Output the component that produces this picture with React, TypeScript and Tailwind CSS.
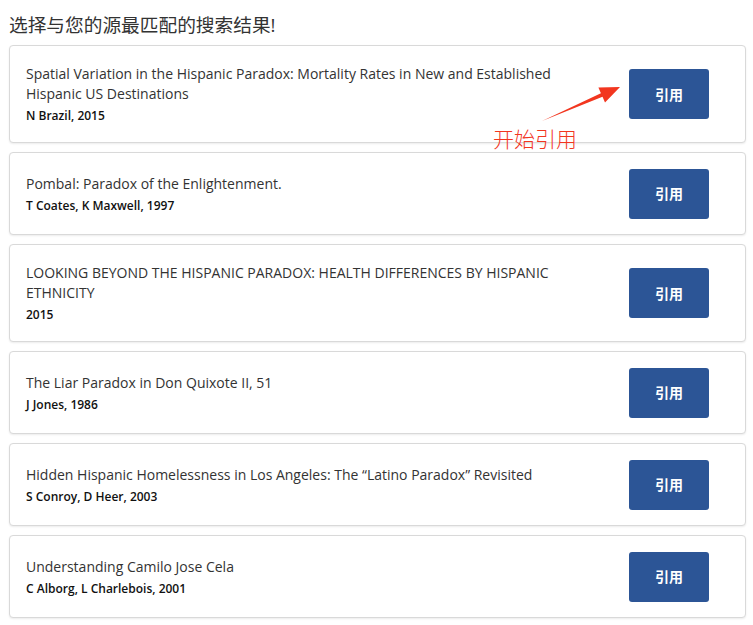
import React from 'react';

interface Source {
  title: string;
  meta: string;
}

const sources: Source[] = [
  {
    title: 'Spatial Variation in the Hispanic Paradox: Mortality Rates in New and Established Hispanic US Destinations',
    meta: 'N Brazil, 2015',
  },
  { title: 'Pombal: Paradox of the Enlightenment.', meta: 'T Coates, K Maxwell, 1997' },
  {
    title: 'LOOKING BEYOND THE HISPANIC PARADOX: HEALTH DIFFERENCES BY HISPANIC ETHNICITY',
    meta: '2015',
  },
  { title: 'The Liar Paradox in Don Quixote II, 51', meta: 'J Jones, 1986' },
  {
    title: 'Hidden Hispanic Homelessness in Los Angeles: The \u201cLatino Paradox\u201d Revisited',
    meta: 'S Conroy, D Heer, 2003',
  },
  { title: 'Understanding Camilo Jose Cela', meta: 'C Alborg, L Charlebois, 2001' },
];

const font = "font-['Open_Sans','Noto_Sans_CJK_SC',sans-serif]";

const SourceCard = ({ source }: { source: Source }) => (
  <div className="flex min-h-[83px] items-center rounded-[4px] border border-[#d9d9d9] bg-white py-[15px] pl-4 pr-[36px] shadow-[0_1px_2px_rgba(0,0,0,0.08)]">
    <div className="w-[572px] pb-[1px] pt-[3px]">
      <div className="text-[14px] leading-[20px] text-[#333]">{source.title}</div>
      <div className="mt-[2px] text-[12px] font-semibold leading-[20px] text-[#111]">{source.meta}</div>
    </div>
    <button className="ml-auto flex h-[50px] w-[80px] shrink-0 items-center justify-center rounded-[3px] bg-[#2c5596] text-[14px] font-bold text-white">
      引用
    </button>
  </div>
);

export default function App() {
  return (
    <div className={`relative min-h-[625px] w-[753px] bg-white pl-[9px] pr-[7px] ${font}`}>
      <h2 className="pt-[11px] pb-[7px] text-[18.7px] leading-[27px] font-normal text-[#333]">
        选择与您的源最匹配的搜索结果!
      </h2>

      <div className="flex flex-col gap-[9px]">
        {sources.map((s, i) => (
          <SourceCard key={i} source={s} />
        ))}
      </div>

      {/* annotation */}
      <svg className="pointer-events-none absolute left-0 top-0" width="753" height="625">
        <polygon
          points="542,121 600.9,93.2 598.4,87.6 620,87 605,102.4 602.5,96.8"
          fill="#f2361f"
        />
      </svg>
      <div className="pointer-events-none absolute left-[493px] top-[125px] text-[21px] leading-[26px] text-[#f2361f] font-['Noto_Sans_CJK_SC',sans-serif] font-light">
        开始引用
      </div>
    </div>
  );
}
